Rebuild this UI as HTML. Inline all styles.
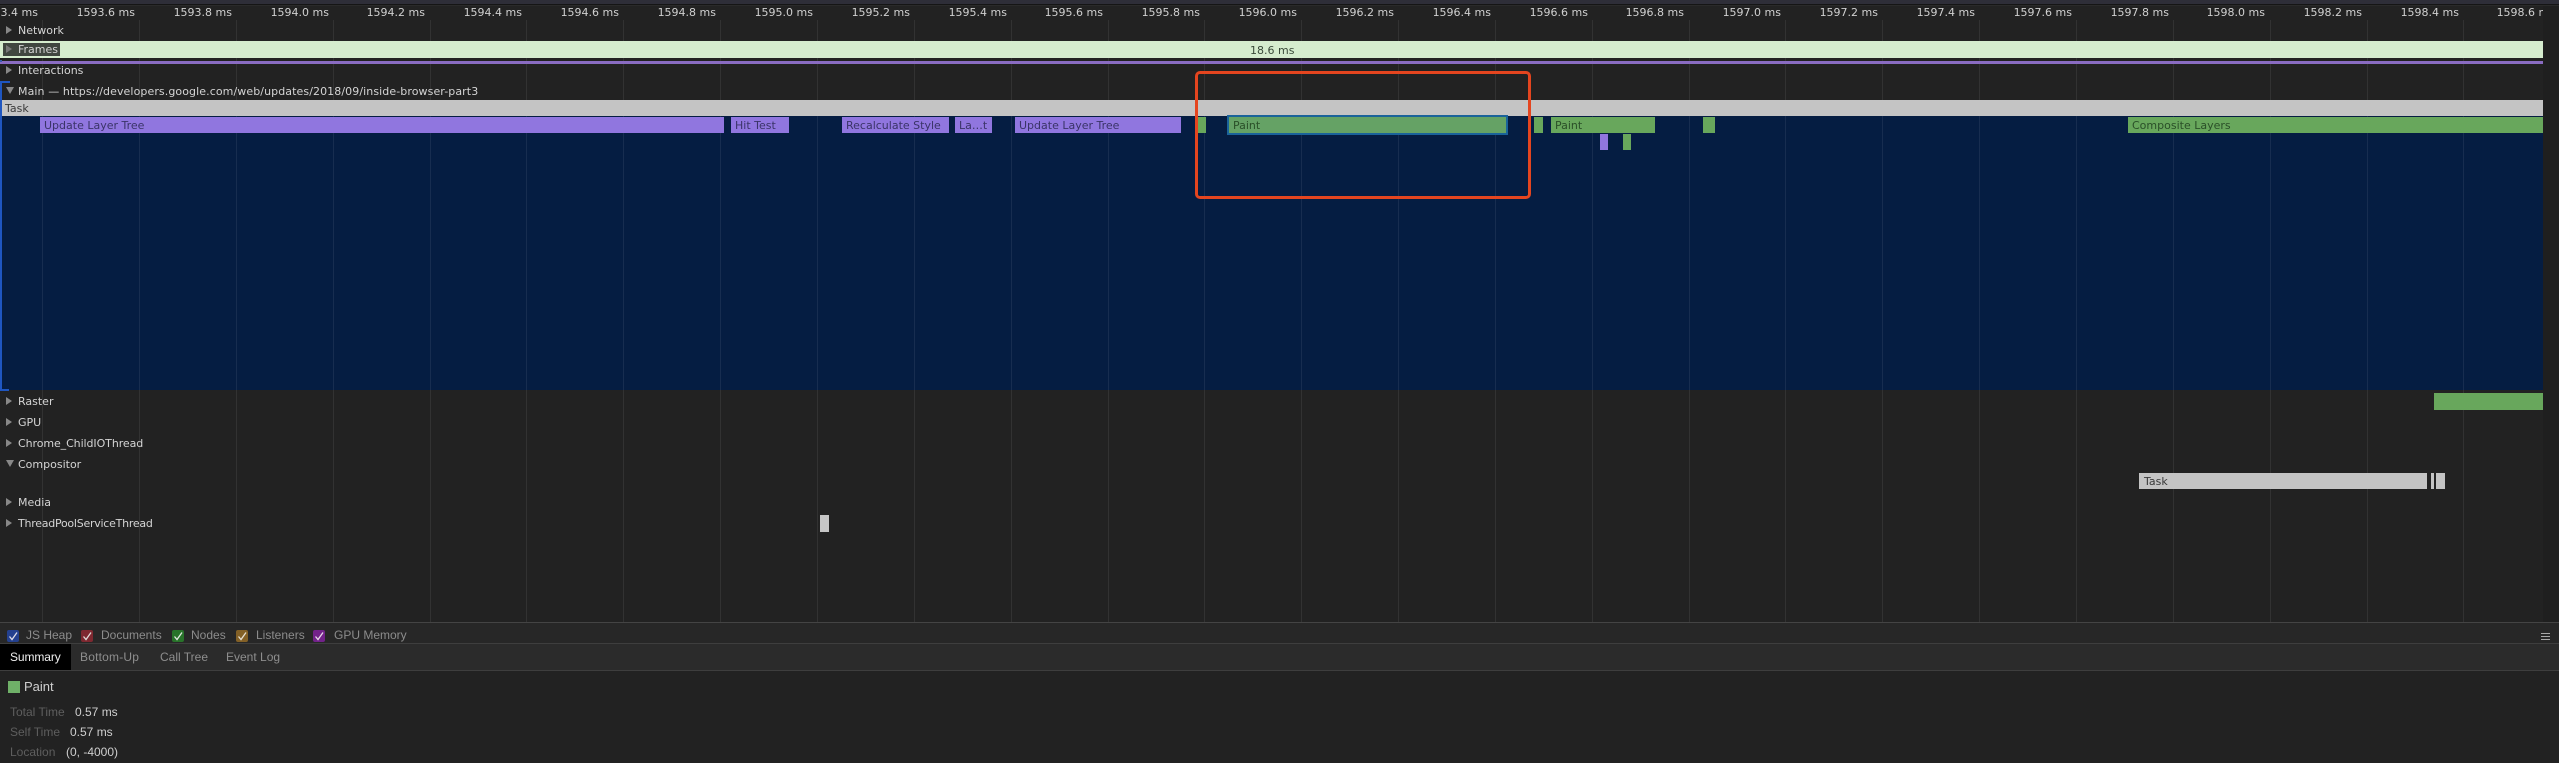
<!DOCTYPE html>
<html><head><meta charset="utf-8"><style>
html,body{margin:0;padding:0;background:#222;}
#p{position:relative;width:2559px;height:763px;overflow:hidden;background:#222;font-family:"DejaVu Sans","Liberation Sans",sans-serif;font-size:11px;}
#p div,#p span.a{position:absolute;white-space:nowrap;}
.g{top:20px;height:602px;width:1px;background:rgba(255,255,255,.075);}
.t{top:6px;height:14px;line-height:14px;color:#d0d0d0;text-align:right;width:100px;}
.l{left:18px;height:14px;line-height:14px;margin-top:1px;color:#d4d4d4;font-size:11px;}
.r{width:0;height:0;left:6px;border-left:6px solid #888;border-top:4px solid transparent;border-bottom:4px solid transparent;}
.d{width:0;height:0;left:5px;border-top:7px solid #888;border-left:4px solid transparent;border-right:4px solid transparent;}
.b{top:117px;height:16px;line-height:18px;color:#3a3468;padding-left:4px;box-sizing:border-box;background:#9076df;overflow:hidden;}
.n{background:#68a75c;color:#2a4f28;}
.s{font-family:"Liberation Sans",sans-serif;font-size:12px;line-height:14px;height:14px;}
.c{top:630px;width:12px;height:12px;border-radius:2px;}
.c svg{position:absolute;left:0;top:0;}
</style></head><body><div id="p">
<div style="left:0;top:0;width:2559px;height:4px;background:#2e2e38"></div>
<div style="left:0;top:4px;width:2559px;height:1px;background:#151515"></div>
<div style="left:0;top:5px;width:2559px;height:1px;background:#2a2a2a"></div>

<div style="left:0;top:116px;width:2543px;height:274px;background:#051d42"></div>
<div style="left:2543px;top:6px;width:16px;height:616px;background:#1f1f1f"></div>

<div class="g" style="left:42px"></div><div class="g" style="left:139px"></div><div class="g" style="left:236px"></div><div class="g" style="left:333px"></div><div class="g" style="left:430px"></div><div class="g" style="left:526px"></div><div class="g" style="left:623px"></div><div class="g" style="left:720px"></div><div class="g" style="left:817px"></div><div class="g" style="left:914px"></div><div class="g" style="left:1011px"></div><div class="g" style="left:1108px"></div><div class="g" style="left:1204px"></div><div class="g" style="left:1301px"></div><div class="g" style="left:1398px"></div><div class="g" style="left:1495px"></div><div class="g" style="left:1592px"></div><div class="g" style="left:1689px"></div><div class="g" style="left:1785px"></div><div class="g" style="left:1882px"></div><div class="g" style="left:1979px"></div><div class="g" style="left:2076px"></div><div class="g" style="left:2173px"></div><div class="g" style="left:2270px"></div><div class="g" style="left:2367px"></div><div class="g" style="left:2463px"></div>

<div class="t" style="left:-62px">1593.4 ms</div>
<div class="t" style="left:35px">1593.6 ms</div>
<div class="t" style="left:132px">1593.8 ms</div>
<div class="t" style="left:229px">1594.0 ms</div>
<div class="t" style="left:325px">1594.2 ms</div>
<div class="t" style="left:422px">1594.4 ms</div>
<div class="t" style="left:519px">1594.6 ms</div>
<div class="t" style="left:616px">1594.8 ms</div>
<div class="t" style="left:713px">1595.0 ms</div>
<div class="t" style="left:810px">1595.2 ms</div>
<div class="t" style="left:907px">1595.4 ms</div>
<div class="t" style="left:1003px">1595.6 ms</div>
<div class="t" style="left:1100px">1595.8 ms</div>
<div class="t" style="left:1197px">1596.0 ms</div>
<div class="t" style="left:1294px">1596.2 ms</div>
<div class="t" style="left:1391px">1596.4 ms</div>
<div class="t" style="left:1488px">1596.6 ms</div>
<div class="t" style="left:1584px">1596.8 ms</div>
<div class="t" style="left:1681px">1597.0 ms</div>
<div class="t" style="left:1778px">1597.2 ms</div>
<div class="t" style="left:1875px">1597.4 ms</div>
<div class="t" style="left:1972px">1597.6 ms</div>
<div class="t" style="left:2069px">1597.8 ms</div>
<div class="t" style="left:2165px">1598.0 ms</div>
<div class="t" style="left:2262px">1598.2 ms</div>
<div class="t" style="left:2359px">1598.4 ms</div>
<div style="left:2385px;top:6px;width:158px;height:14px;overflow:hidden"><div class="t" style="left:70px;top:0;width:100px">1598.6 ms</div></div>

<!-- frames -->
<div style="left:0;top:41px;width:2543px;height:17px;background:#d5ecce;line-height:19px;text-align:center;color:#3a4a3a;padding-left:0"><span style="position:absolute;left:1250px;top:0">18.6 ms</span></div>
<div style="left:3px;top:43px;width:57px;height:13px;background:#404640"></div>
<div style="left:0;top:61px;width:2543px;height:3px;background:#8a6cc2"></div>
<div style="left:0;top:60px;width:2px;height:2px;background:#3a5fb0"></div>

<!-- left labels -->
<div class="r" style="top:26px"></div><div class="l" style="top:23px">Network</div>
<div class="r" style="top:45px;border-left-color:#777"></div><div class="l" style="top:42px">Frames</div>
<div class="r" style="top:66px"></div><div class="l" style="top:63px">Interactions</div>
<div class="d" style="top:87px;left:6px"></div><div class="l" style="top:84px;letter-spacing:.09px">Main — https://developers.google.com/web/updates/2018/09/inside-browser-part3</div>

<!-- task -->
<div style="left:2px;top:100px;width:2541px;height:16px;background:#c4c4c4;line-height:18px;color:#3a3a3a;padding-left:3px;box-sizing:border-box">Task</div>

<!-- selection outline -->
<div style="left:0;top:81px;width:2px;height:309px;background:#1f56c0"></div>
<div style="left:0;top:81px;width:10px;height:2px;background:#1f56c0"></div>
<div style="left:0;top:389px;width:9px;height:2px;background:#1f56c0"></div>

<!-- bars -->
<div class="b" style="left:40px;width:684px">Update Layer Tree</div>
<div class="b" style="left:731px;width:58px">Hit Test</div>
<div class="b" style="left:842px;width:107px">Recalculate Style</div>
<div class="b" style="left:955px;width:37px">La…t</div>
<div class="b" style="left:1015px;width:166px">Update Layer Tree</div>
<div class="b n" style="left:1195px;width:11px"></div>
<div class="b n" style="left:1227px;top:115px;width:281px;height:20px;line-height:18px;border:2px solid #1a639a;background:#65a265;padding-left:4px">Paint</div>
<div class="b n" style="left:1534px;width:9px"></div>
<div class="b n" style="left:1551px;width:104px">Paint</div>
<div class="b" style="left:1600px;top:134px;width:8px;padding:0"></div>
<div class="b n" style="left:1623px;top:134px;width:8px;padding:0"></div>
<div class="b n" style="left:1703px;width:12px"></div>
<div class="b n" style="left:2128px;width:415px">Composite Layers</div>

<!-- red annotation -->
<div style="left:1195px;top:71px;width:336px;height:128px;box-sizing:border-box;border:3px solid #e4451f;border-radius:5px"></div>

<!-- lower tracks -->
<div class="r" style="top:397px"></div><div class="l" style="top:394px">Raster</div>
<div class="r" style="top:418px"></div><div class="l" style="top:415px">GPU</div>
<div class="r" style="top:439px"></div><div class="l" style="top:436px;letter-spacing:-.08px">Chrome_ChildIOThread</div>
<div class="d" style="top:460px;left:6px"></div><div class="l" style="top:457px">Compositor</div>
<div class="r" style="top:498px"></div><div class="l" style="top:495px">Media</div>
<div class="r" style="top:519px"></div><div class="l" style="top:516px;letter-spacing:-.25px">ThreadPoolServiceThread</div>

<div style="left:2434px;top:393px;width:109px;height:17px;background:#68a75c"></div>
<div style="left:820px;top:515px;width:9px;height:17px;background:#c6c6c6"></div>
<div style="left:2139px;top:473px;width:288px;height:16px;background:#c4c4c4;line-height:18px;color:#3a3a3a;padding-left:5px;box-sizing:border-box">Task</div>
<div style="left:2431px;top:473px;width:3px;height:16px;background:#c4c4c4"></div>
<div style="left:2436px;top:473px;width:9px;height:16px;background:#c4c4c4"></div>

<!-- bottom -->
<div style="left:0;top:622px;width:2559px;height:141px;background:#222"></div>
<div style="left:0;top:622px;width:2559px;height:1px;background:#444"></div>
<div style="left:0;top:623px;width:2559px;height:20px;background:#272727"></div>
<div style="left:0;top:643px;width:2559px;height:1px;background:#3e3e3e"></div>
<div style="left:0;top:644px;width:2559px;height:26px;background:#2b2b2b"></div>
<div style="left:0;top:670px;width:2559px;height:1px;background:#3e3e3e"></div>

<div class="c" style="left:7px;background:#23408f"><svg width="12" height="12"><path d="M2.5 6.5L5 9.5L10 2.5" fill="none" stroke="#dcdce8" stroke-width="1.3"/></svg></div>
<div class="s" style="left:26px;top:628px;color:#8c8c8c">JS Heap</div>
<div class="c" style="left:81px;background:#7e2830"><svg width="12" height="12"><path d="M2.5 6.5L5 9.5L10 2.5" fill="none" stroke="#e0d8d8" stroke-width="1.3"/></svg></div>
<div class="s" style="left:101px;top:628px;color:#8c8c8c">Documents</div>
<div class="c" style="left:172px;background:#28732a"><svg width="12" height="12"><path d="M2.5 6.5L5 9.5L10 2.5" fill="none" stroke="#e0e8e0" stroke-width="1.3"/></svg></div>
<div class="s" style="left:191px;top:628px;color:#8c8c8c">Nodes</div>
<div class="c" style="left:236px;background:#836026"><svg width="12" height="12"><path d="M2.5 6.5L5 9.5L10 2.5" fill="none" stroke="#e6dfd2" stroke-width="1.3"/></svg></div>
<div class="s" style="left:256px;top:628px;color:#8c8c8c">Listeners</div>
<div class="c" style="left:313px;background:#72228a"><svg width="12" height="12"><path d="M2.5 6.5L5 9.5L10 2.5" fill="none" stroke="#e6d8e8" stroke-width="1.3"/></svg></div>
<div class="s" style="left:334px;top:628px;color:#8c8c8c">GPU Memory</div>

<div style="left:2541px;top:633px;width:9px;height:1px;background:#a8a8a8"></div>
<div style="left:2541px;top:636px;width:9px;height:1px;background:#a8a8a8"></div>
<div style="left:2541px;top:639px;width:9px;height:1px;background:#a8a8a8"></div>

<div style="left:0;top:644px;width:71px;height:26px;background:#000"></div>
<div class="s" style="left:10px;top:650px;color:#f0f0f0;letter-spacing:-.1px">Summary</div>
<div class="s" style="left:80px;top:650px;color:#8e8e8e;letter-spacing:.2px">Bottom-Up</div>
<div class="s" style="left:160px;top:650px;color:#8e8e8e">Call Tree</div>
<div class="s" style="left:226px;top:650px;color:#8e8e8e">Event Log</div>

<div style="left:8px;top:681px;width:12px;height:12px;background:#6fb068"></div>
<div class="s" style="left:24px;top:679px;color:#cfcfcf;font-size:13px;height:15px;line-height:15px">Paint</div>
<div class="s" style="left:10px;top:705px;color:#5e5e5e">Total Time</div>
<div class="s" style="left:75px;top:705px;color:#cfcfcf">0.57 ms</div>
<div class="s" style="left:10px;top:725px;color:#5e5e5e">Self Time</div>
<div class="s" style="left:70px;top:725px;color:#cfcfcf">0.57 ms</div>
<div class="s" style="left:10px;top:745px;color:#5e5e5e">Location</div>
<div class="s" style="left:66px;top:745px;color:#cfcfcf">(0, -4000)</div>
</div></body></html>
